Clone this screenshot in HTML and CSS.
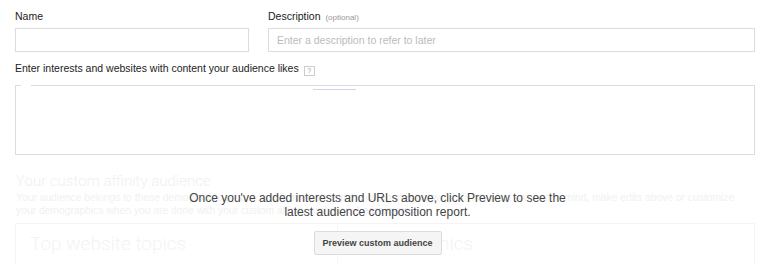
FILE: index.html
```html
<!DOCTYPE html>
<html lang="en">
<head>
  <meta charset="UTF-8">
  <meta name="viewport" content="width=device-width, initial-scale=1.0">
  <title>Custom affinity audience</title>
  <link rel="stylesheet" href="styles.css">
</head>
<body>
  <div class="page">
    <div class="row">
      <div class="field">
        <label for="name">Name</label>
        <input type="text" id="name">
      </div>
      <div class="field">
        <label for="desc">Description <span class="optional">(optional)</span></label>
        <input type="text" id="desc" placeholder="Enter a description to refer to later">
      </div>
    </div>

    <label class="interests-label">Enter interests and websites with content your audience likes <span class="help">?</span></label>
    <div class="interests">
      <span class="corner-gap"></span>
      <span class="tab-line"></span>
    </div>

    <div class="preview">
      <div class="faded">
        <h2>Your custom affinity audience</h2>
        <p>Your audience belongs to these demographic groups and is interested in the categories below. If it's not what you had in mind, make edits above or customize<br>
          your demographics when you are done with your custom affinity audience. <a href="#">Learn more</a></p>
        <div class="card">
          <div class="card-col">Top website topics</div>
          <div class="card-col">Demographics</div>
        </div>
      </div>

      <!-- message shown over the empty report -->
      <div class="preview-msg">
        <p>Once you've added interests and URLs above, click Preview to see the<br>latest audience composition report.</p>
        <button>Preview custom audience</button>
      </div>
    </div>
  </div>
</body>
</html>
```

FILE: styles.css
```css
body {
  font-family: "Liberation Sans", Arial, sans-serif;
  color: #222;
  background-color: white;
  margin: 0;
  padding: 0;
  overflow: hidden;
}
.page {
  padding: 10px 13px 0 15px;
}
.row {
  display: grid;
  grid-template-columns: 234px 487px;
  column-gap: 19px;
}
label {
  display: block;
  font-size: 10.5px;
  line-height: 13px;
  height: 13px;
  margin-bottom: 5px;
}
.optional {
  font-size: 8px;
  line-height: 8px;
  color: #999;
  margin-left: 2px;
}
input {
  display: block;
  width: 100%;
  height: 24px;
  box-sizing: border-box;
  border: 1px solid #dcdcdc;
  padding: 0 8px;
  font-family: inherit;
  font-size: 10.5px;
  color: #222;
  outline: none;
}
input::placeholder {
  color: #bbb;
}
.interests-label {
  margin-top: 10px;
  margin-bottom: 10px;
}
.help {
  display: inline-block;
  width: 9px;
  height: 8px;
  border: 1px solid #ccc;
  font-size: 7px;
  line-height: 8px;
  text-align: center;
  color: #999;
  margin-left: 2px;
  vertical-align: -1px;
}
.interests {
  position: relative;
  height: 70px;
  box-sizing: border-box;
  border: 1px solid #dcdcdc;
}
.corner-gap {
  position: absolute;
  top: -1px;
  left: 5px;
  width: 10px;
  height: 1px;
  background-color: white;
}
.tab-line {
  position: absolute;
  top: 3px;
  left: 297px;
  width: 43px;
  height: 1px;
  background-color: #cdd4ec;
}
.preview {
  position: relative;
}
.faded h2 {
  font-family: Roboto, sans-serif;
  font-weight: 300;
  font-size: 15px;
  line-height: 18px;
  color: #f0f0f0;
  margin: 17px 0 1px 1px;
}
.faded p {
  font-size: 10.3px;
  line-height: 13px;
  color: #f1f1f1;
  margin: 0 0 6px 1px;
}
.faded a {
  color: #e8edf8;
  text-decoration: none;
}
.card {
  display: grid;
  grid-template-columns: 321px 1fr;
  height: 60px;
  border: 1px solid #f4f4f4;
}
.card-col {
  font-family: Roboto, sans-serif;
  font-weight: 300;
  font-size: 19px;
  color: #f3f3f3;
  padding: 8px 14px;
}
.card-col + .card-col {
  border-left: 1px solid #f6f6f6;
}
.preview-msg {
  position: absolute;
  top: 19px;
  left: -15px;
  right: 0;
  text-align: center;
}
.preview-msg p {
  font-size: 12px;
  line-height: 14px;
  color: #444;
  margin: 0 0 12px;
}
button {
  font-family: inherit;
  font-size: 9px;
  font-weight: bold;
  color: #444;
  background-color: #f5f5f5;
  border: 1px solid #dcdcdc;
  border-radius: 2px;
  width: 128px;
  height: 24px;
  padding: 0;
  cursor: pointer;
}
```
